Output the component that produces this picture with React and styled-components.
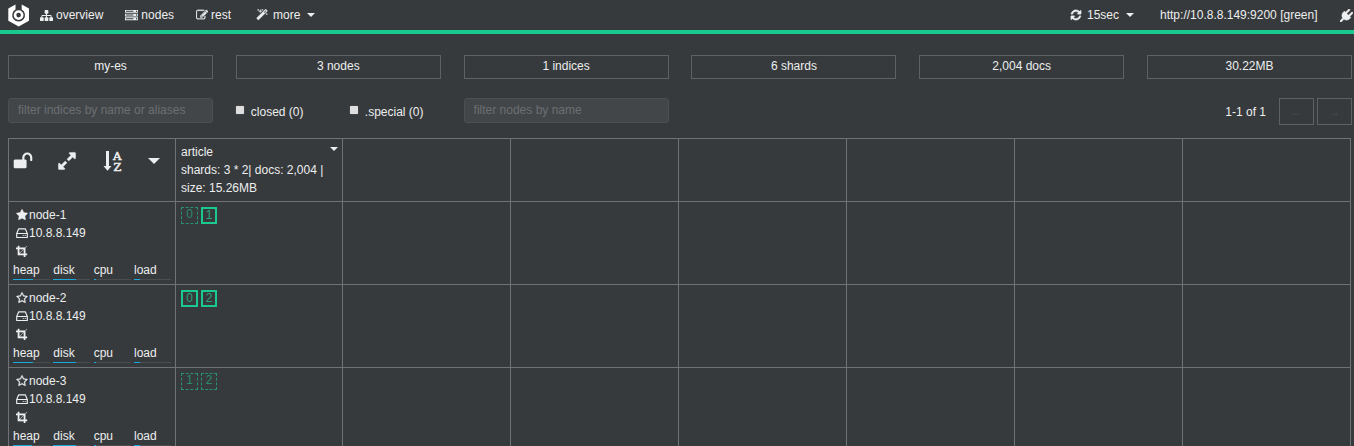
import React from 'react';
import styled, { createGlobalStyle } from 'styled-components';

const GlobalStyle = createGlobalStyle`
  * { box-sizing: border-box; }
  body {
    margin: 0;
    overflow: hidden;
    background: #373a3c;
    color: #eceeef;
    font: 12px/18px "Liberation Sans", Arial, sans-serif;
  }
`;

const PATHS = {
  sitemap: 'M1792 1248v320q0 40-28 68t-68 28h-320q-40 0-68-28t-28-68v-320q0-40 28-68t68-28h96v-192h-512v192h96q40 0 68 28t28 68v320q0 40-28 68t-68 28h-320q-40 0-68-28t-28-68v-320q0-40 28-68t68-28h96v-192h-512v192h96q40 0 68 28t28 68v320q0 40-28 68t-68 28h-320q-40 0-68-28t-28-68v-320q0-40 28-68t68-28h96v-192q0-52 38-90t90-38h512v-192h-96q-40 0-68-28t-28-68v-320q0-40 28-68t68-28h320q40 0 68 28t28 68v320q0 40-28 68t-68 28h-96v192h512q52 0 90 38t38 90v192h96q40 0 68 28t28 68z',
  server: 'M128 1408h1024v-128h-1024v128zm0-512h1024v-128h-1024v128zm1568 448q0-40-28-68t-68-28-68 28-28 68 28 68 68 28 68-28 28-68zm-1568-960h1024v-128h-1024v128zm1568 448q0-40-28-68t-68-28-68 28-28 68 28 68 68 28 68-28 28-68zm0-512q0-40-28-68t-68-28-68 28-28 68 28 68 68 28 68-28 28-68zm96 832v384h-1792v-384h1792zm0-512v384h-1792v-384h1792zm0-512v384h-1792v-384h1792z',
  edit: 'M888 1184l116-116-152-152-116 116v56h96v96h56zm440-720q-16-16-33 1l-350 350q-17 17-1 33t33-1l350-350q17-17 1-33zm80 594v190q0 119-84.5 203.5t-203.5 84.5h-832q-119 0-203.5-84.5t-84.5-203.5v-832q0-119 84.5-203.5t203.5-84.5h832q63 0 117 25 15 7 18 23 3 17-9 29l-49 49q-14 14-32 8-23-6-45-6h-832q-66 0-113 47t-47 113v832q0 66 47 113t113 47h832q66 0 113-47t47-113v-126q0-13 9-22l64-64q15-15 35-7t20 29zm-96-738l288 288-672 672h-288v-288zm444 132l-92 92-288-288 92-92q28-28 68-28t68 28l152 152q28 28 28 68t-28 68z',
  magic: 'M1254 581l293-293-107-107-293 293zm447-293q0 27-18 45l-1286 1286q-18 18-45 18t-45-18l-198-198q-18-18-18-45t18-45l1286-1286q18-18 45-18t45 18l198 198q18 18 18 45zm-1351-190l98 30-98 30-30 98-30-98-98-30 98-30 30-98zm350 162l196 60-196 60-60 196-60-196-196-60 196-60 60-196zm930 478l98 30-98 30-30 98-30-98-98-30 98-30 30-98zm-640-640l98 30-98 30-30 98-30-98-98-30 98-30 30-98z',
  refresh: 'M1639 1056q0 5-1 7-64 268-268 434.5t-478 166.5q-146 0-282.5-55t-243.5-157l-129 129q-19 19-45 19t-45-19-19-45v-448q0-26 19-45t45-19h448q26 0 45 19t19 45-19 45l-137 137q71 66 161 102t187 36q134 0 250-65t186-179q11-17 53-117 8-23 30-23h192q13 0 22.5 9.5t9.5 22.5zm25-800v448q0 26-19 45t-45 19h-448q-26 0-45-19t-19-45 19-45l138-138q-148-137-349-137-134 0-250 65t-186 179q-11 17-53 117-8 23-30 23h-199q-13 0-22.5-9.5t-9.5-22.5v-7q65-268 270-434.5t480-166.5q146 0 284 55.5t245 156.5l130-129q19-19 45-19t45 19 19 45z',
  plug: 'M1755 453q37 38 37 90.5t-37 90.5l-401 400 150 150-160 160q-163 163-389.5 186.5t-411.5-100.5l-362 362h-181v-181l362-362q-124-185-100.5-411.5t186.5-389.5l160-160 150 150 400-401q38-37 91-37t90 37 37 90.5-37 90.5l-400 401 234 234 401-400q38-37 91-37t90 37z',
  unlock: 'M1728 576v256q0 26-19 45t-45 19h-64q-26 0-45-19t-19-45v-256q0-106-75-181t-181-75-181 75-75 181v192h96q40 0 68 28t28 68v576q0 40-28 68t-68 28h-960q-40 0-68-28t-28-68v-576q0-40 28-68t68-28h672v-192q0-185 131.5-316.5t316.5-131.5 316.5 131.5 131.5 316.5z',
  expand: 'M883 1056q0 13-10 23l-332 332 144 144q19 19 19 45t-19 45-45 19h-448q-26 0-45-19t-19-45v-448q0-26 19-45t45-19 45 19l144 144 332-332q10-10 23-10t23 10l114 114q10 10 10 23zm781-864v448q0 26-19 45t-45 19-45-19l-144-144-332 332q-10 10-23 10t-23-10l-114-114q-10-10-10-23t10-23l332-332-144-144q-19-19-19-45t19-45 45-19h448q26 0 45 19t19 45z',
  star: 'M1728 647q0 22-26 48l-363 354 86 500q1 7 1 20 0 21-10.5 35.5t-30.5 14.5q-19 0-40-12l-449-236-449 236q-22 12-40 12-21 0-31.5-14.5t-10.5-35.5q0-6 2-20l86-500-364-354q-25-27-25-48 0-37 56-46l502-73 225-455q19-41 49-41t49 41l225 455 502 73q56 9 56 46z',
  starOutline: 'M1201 1004l306-297-422-62-189-382-189 382-422 62 306 297-73 421 378-199 377 199zm527-357q0 22-26 48l-363 354 86 500q1 7 1 20 0 50-41 50-19 0-40-12l-449-236-449 236q-22 12-40 12-21 0-31.5-14.5t-10.5-35.5q0-6 2-20l86-500-364-354q-25-27-25-48 0-37 56-46l502-73 225-455q19-41 49-41t49 41l225 455 502 73q56 9 56 46z',
  crop: 'M557 1280h595v-595zm-45-45l595-595h-595v595zm1152 77v192q0 14-9 23t-23 9h-224v224q0 14-9 23t-23 9h-192q-14 0-23-9t-9-23v-224h-864q-14 0-23-9t-9-23v-864h-224q-14 0-23-9t-9-23v-192q0-14 9-23t23-9h224v-224q0-14 9-23t23-9h192q14 0 23 9t9 23v224h851l246-247q10-9 23-9t23 9q9 10 9 23t-9 23l-247 246v851h224q14 0 23 9t9 23z',
};

const Svg = styled.svg`
  display: block;
  flex: none;
  fill: currentColor;
`;

const Icon = ({ name, size = 12, weight = 0 }) => (
  <Svg width={size} height={size} viewBox="0 0 1792 1792" stroke="currentColor" strokeWidth={weight} aria-hidden="true">
    <path d={PATHS[name]} />
  </Svg>
);

const DiskIcon = () => (
  <Svg width="12" height="12" viewBox="0 0 12 12" aria-hidden="true">
    <path d="M0.700 6.500L2.700 1.800h6.600L11.300 6.500v4H0.700zM0.700 6.500h10.600" fill="none" stroke="currentColor" strokeWidth="1.150" strokeLinejoin="round" />
    <path d="M6.700 8h1v1h-1zM8.700 8h1v1h-1z" />
  </Svg>
);

const Caret = styled.i`
  flex: none;
  width: ${(p) => (p.$size || 4) * 2}px;
  margin-left: ${(p) => p.$before || 0}px;
  border: ${(p) => p.$size || 4}px solid transparent;
  border-top-color: #eceeef;
  border-bottom: 0;
`;

const Navbar = styled.nav`
  display: flex;
  align-items: center;
  height: 34px;
  padding-left: 8px;
  border-bottom: 4px solid #1ac98e;
`;

const NavItem = styled.a`
  display: flex;
  align-items: center;
  flex: none;
  gap: ${(p) => p.$gap ?? 3}px;
  margin-left: ${(p) => p.$before}px;
  white-space: nowrap;
`;

const NavRight = styled.div`
  display: flex;
  align-items: center;
  margin-left: auto;
  margin-right: 1.500px;
`;

const Page = styled.main`
  width: 1344px;
  margin-left: 8px;
  padding-top: 21px;
`;

const SixColumns = styled.div`
  display: grid;
  grid-template-columns: repeat(6, 205px);
  justify-content: space-between;
`;

const Stat = styled.div`
  height: 24px;
  border: 1px solid #5e6164;
  line-height: 20px;
  text-align: center;
`;

const Filters = styled(SixColumns)`
  margin-top: 19px;
  height: 40px;
  align-items: start;
`;

const Input = styled.input`
  width: 205px;
  height: 25px;
  padding: 0 9px 1px;
  border: 1px solid #4c4f52;
  border-radius: 3px;
  background: #434648;
  font: inherit;
  color: #eceeef;
  &::placeholder { color: #6b6f73; opacity: 1; }
`;

const Checks = styled.div`
  display: grid;
  grid-template-columns: 114px 1fr;
  padding-top: 5px;
`;

const Check = styled.label`
  display: flex;
  gap: 7px;
  white-space: nowrap;
`;

const Box = styled.span`
  width: 8px;
  height: 8px;
  margin-top: 3px;
  border-radius: 1px;
  background: #dedede;
  box-shadow: 0 0 1px #aaa;
`;

const Pager = styled.div`
  grid-column: 6;
  display: flex;
  justify-content: flex-end;
  align-items: center;
  gap: 3px;
`;

const PagerText = styled.span`
  margin-right: 10px;
  padding-top: 1px;
`;

const PagerButton = styled.button`
  width: 35px;
  height: 27px;
  padding: 0;
  border: 1px solid #5e6164;
  background: transparent;
  color: #484b4e;
  font: inherit;
`;

const Table = styled.section`
  display: grid;
  width: 1343px;
  grid-template-columns: 167px 167px repeat(6, 168px);
  grid-template-rows: 63px 83px 83px 83px;
  border: solid #6f7377;
  border-width: 1px 0 0 1px;
`;

const Cell = styled.div`
  border: solid #6f7377;
  border-width: 0 1px 1px 0;
`;

const Tools = styled(Cell)`
  display: grid;
  grid-template-columns: 44px 46px 45px 1fr;
  align-items: center;
  height: 63px;
  padding: 0 0 18px 4px;
`;

const IndexHead = styled(Cell)`
  display: flex;
  align-items: flex-start;
  justify-content: space-between;
  padding: 4px 4px 0 5px;
  white-space: nowrap;
  ${Caret} { margin-top: 4px; }
`;

const NodeCell = styled(Cell)`
  padding: 4px 4px 0;
`;

const NodeLine = styled.div`
  display: flex;
  align-items: center;
  gap: 1px;
  height: 18px;
  padding-left: 3px;
`;

const Meters = styled.div`
  display: grid;
  grid-template-columns: repeat(4, 37px);
  justify-content: space-between;
  padding-top: 1px;
`;

const MeterLabel = styled.div`
  height: 18px;
`;

const Track = styled.div`
  height: 1px;
  background: #4b4e51;
`;

const Fill = styled.div`
  height: 1px;
  background: #1ca8dd;
`;

const Shards = styled(Cell)`
  display: flex;
  gap: 3px;
  padding: 5px;
`;

const Shard = styled.span`
  width: ${(p) => p.$width}px;
  height: 17px;
  border: ${(p) => (p.$primary ? '2px solid #1ac98e' : '1px dashed #28916d')};
  color: ${(p) => (p.$primary ? '#27a67c' : '#2a8b6b')};
  line-height: ${(p) => (p.$primary ? 12 : 13)}px;
  text-align: center;
`;

const Logo = () => (
  <Svg width="22" height="23" viewBox="0 0 22 23" aria-hidden="true">
    <path fill="#fff" fillRule="evenodd" d="M7.500 0.500L0.300 4.500v12.200L10.700 22.500l10.300-5.800V4.500L13.700 0.500v5a6.400 6.400 0 1 1-6.200 0z" />
    <circle cx="10.600" cy="11.100" r="3.600" fill="none" stroke="#fff" strokeWidth="2.600" />
  </Svg>
);

const Letter = styled.text`
  font: 11px "DejaVu Serif", serif;
  stroke: currentColor;
  stroke-width: 0.5px;
`;

const SortAlpha = () => (
  <Svg width="20" height="24" viewBox="0 0 20 24" aria-hidden="true">
    <path d="M3 2h3v15h2.500L4.500 21.800 0.500 17H3z" />
    <Letter x="10" y="10.800" textLength="8.500" lengthAdjust="spacingAndGlyphs">A</Letter>
    <Letter x="10.400" y="21.600" textLength="7.800" lengthAdjust="spacingAndGlyphs">Z</Letter>
  </Svg>
);

const stats = ['my-es', '3 nodes', '1 indices', '6 shards', '2,004 docs', '30.22MB'];
const nodes = [
  { name: 'node-1', master: true, heap: 20, shards: [[0, false], [1, true]] },
  { name: 'node-2', heap: 20, shards: [[0, true], [2, true]] },
  { name: 'node-3', heap: 19, shards: [[1, false], [2, false]] },
];
const blanks = (n) => Array.from({ length: n }, (_, i) => <Cell key={i} />);

const NodeRow = ({ node }) => (
  <>
    <NodeCell>
      <NodeLine><Icon name={node.master ? 'star' : 'starOutline'} weight={50} />{node.name}</NodeLine>
      <NodeLine><DiskIcon />10.8.8.149</NodeLine>
      <NodeLine><Icon name="crop" weight={15} /></NodeLine>
      <Meters>
        {[['heap', node.heap], ['disk', 23], ['cpu', 2], ['load', 6]].map(([label, width]) => (
          <div key={label}>
            <MeterLabel>{label}</MeterLabel>
            <Track><Fill style={{ width }} /></Track>
          </div>
        ))}
      </Meters>
    </NodeCell>
    <Shards>
      {node.shards.map(([id, primary], i) => (
        <Shard key={id} $primary={primary} $width={17 - i}>{id}</Shard>
      ))}
    </Shards>
    {blanks(6)}
  </>
);

export default function App() {
  return (
    <>
      <GlobalStyle />
      <Navbar>
        <Logo />
        <NavItem $before={10}><Icon name="sitemap" size={13} />overview</NavItem>
        <NavItem $before={22}><Icon name="server" size={13} />nodes</NavItem>
        <NavItem $before={22}><Icon name="edit" weight={40} />rest</NavItem>
        <NavItem $before={25} $gap={5}><Icon name="magic" weight={50} />more<Caret $before={2} /></NavItem>
        <NavRight>
          <NavItem $gap={5}><Icon name="refresh" weight={60} />15sec<Caret $before={2} /></NavItem>
          <NavItem $before={26}>http://10.8.8.149:9200 [green]</NavItem>
          <NavItem $before={22}><Icon name="plug" size={13} weight={60} /></NavItem>
        </NavRight>
      </Navbar>
      <Page>
        <SixColumns>{stats.map((s) => <Stat key={s}>{s}</Stat>)}</SixColumns>
        <Filters>
          <Input placeholder="filter indices by name or aliases" />
          <Checks>
            <Check><Box />closed (0)</Check>
            <Check><Box />.special (0)</Check>
          </Checks>
          <Input placeholder="filter nodes by name" />
          <Pager>
            <PagerText>1-1 of 1</PagerText>
            <PagerButton>←</PagerButton>
            <PagerButton>→</PagerButton>
          </Pager>
        </Filters>
        <Table>
          <Tools>
            <Icon name="unlock" size={20} />
            <Icon name="expand" size={20} weight={40} />
            <SortAlpha />
            <Caret $size={6} />
          </Tools>
          <IndexHead>
            <div>article<br />shards: 3 * 2| docs: 2,004 |<br />size: 15.26MB</div>
            <Caret />
          </IndexHead>
          {blanks(6)}
          {nodes.map((n) => <NodeRow key={n.name} node={n} />)}
        </Table>
      </Page>
    </>
  );
}
